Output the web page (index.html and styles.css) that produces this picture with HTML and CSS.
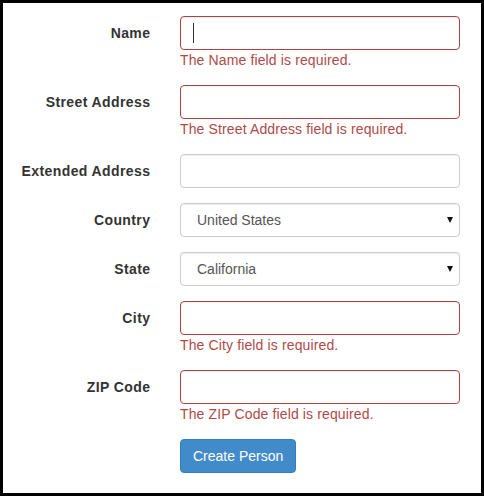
FILE: index.html
```html
<!DOCTYPE html>
<html>
<head>
<meta charset="utf-8">
<link rel="stylesheet" href="styles.css">
</head>
<body>
<div class="frame">
  <form class="form">
    <div class="group">
      <label class="label">Name</label>
      <div class="field">
        <div class="control-wrap">
          <input class="control invalid" type="text">
          <span class="caret"></span>
        </div>
        <span class="error">The Name field is required.</span>
      </div>
    </div>
    <div class="group">
      <label class="label">Street Address</label>
      <div class="field">
        <input class="control invalid" type="text">
        <span class="error">The Street Address field is required.</span>
      </div>
    </div>
    <div class="group">
      <label class="label">Extended Address</label>
      <div class="field">
        <input class="control" type="text">
      </div>
    </div>
    <div class="group">
      <label class="label">Country</label>
      <div class="field">
        <div class="control-wrap">
          <select class="control select"><option>United States</option></select>
          <span class="arrow"></span>
        </div>
      </div>
    </div>
    <div class="group">
      <label class="label">State</label>
      <div class="field">
        <div class="control-wrap">
          <select class="control select"><option>California</option></select>
          <span class="arrow"></span>
        </div>
      </div>
    </div>
    <div class="group">
      <label class="label">City</label>
      <div class="field">
        <input class="control invalid" type="text">
        <span class="error">The City field is required.</span>
      </div>
    </div>
    <div class="group">
      <label class="label">ZIP Code</label>
      <div class="field">
        <input class="control invalid" type="text">
        <span class="error">The ZIP Code field is required.</span>
      </div>
    </div>
    <div class="group">
      <span></span>
      <div class="field">
        <button class="btn" type="button">Create Person</button>
      </div>
    </div>
  </form>
</div>
</body>
</html>
```

FILE: styles.css
```css
* { box-sizing: border-box; }
html, body { margin: 0; padding: 0; background: #fff; }
body {
  font-family: "Liberation Sans", Arial, sans-serif;
  font-size: 14px;
  line-height: 20px;
  color: #333;
}
.frame {
  width: 484px;
  height: 496px;
  border: 3px solid #000;
  padding-top: 13px;
}
.form { display: flex; flex-direction: column; gap: 15px; }
.group {
  display: grid;
  grid-template-columns: 147px 280px;
  column-gap: 30px;
}
.label {
  font-weight: bold;
  text-align: right;
  padding-top: 7px;
  color: #333;
  letter-spacing: 0.4px;
  margin-right: -0.4px;
}
.field { display: flex; flex-direction: column; }
.control-wrap { position: relative; }
.control {
  display: block;
  width: 280px;
  height: 34px;
  padding: 6px 12px;
  font-family: inherit;
  font-size: 14px;
  line-height: 20px;
  color: #555;
  background: #fff;
  border: 1px solid #ccc;
  border-radius: 4px;
  box-shadow: inset 0 1px 1px rgba(0,0,0,.075);
  outline: none;
  margin: 0;
}
.control.invalid { border-color: #a94442; }
.select {
  appearance: none;
  -webkit-appearance: none;
  padding-left: 16px;
}
.arrow {
  position: absolute;
  left: 267px;
  top: 14px;
  width: 0;
  height: 0;
  border-left: 3px solid transparent;
  border-right: 3px solid transparent;
  border-top: 6px solid #111;
}
.caret {
  position: absolute;
  left: 13px;
  top: 7px;
  width: 1px;
  height: 20px;
  background: #333;
}
.error {
  color: #b04a48;
  display: block;
  letter-spacing: 0.13px;
}
.btn {
  align-self: flex-start;
  height: 34px;
  padding: 6px 12px;
  font-family: inherit;
  font-size: 14px;
  line-height: 20px;
  color: #fff;
  background: #428bca;
  border: 1px solid #357ebd;
  border-radius: 4px;
}
```
